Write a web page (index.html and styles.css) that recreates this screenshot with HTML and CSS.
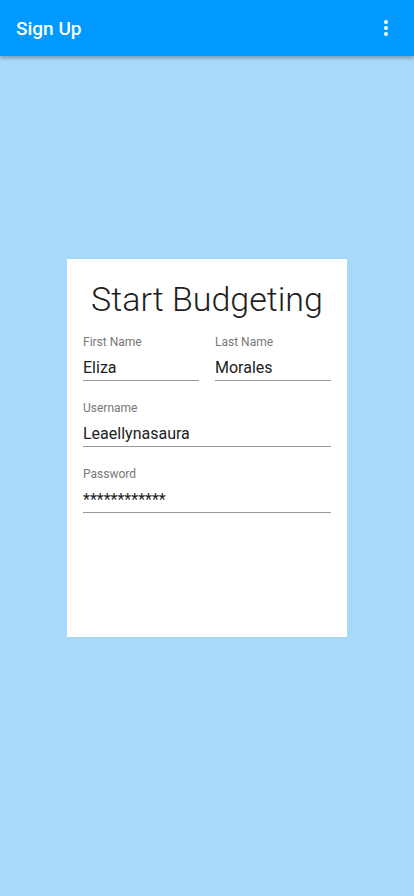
FILE: index.html
```html
<!DOCTYPE html>
<html lang="en">
<head>
<meta charset="utf-8">
<title>Sign Up</title>
<link rel="stylesheet" href="styles.css">
</head>
<body>
<header class="appbar">
  <h1 class="appbar-title">Sign Up</h1>
  <button class="menu-btn" aria-label="More options">
    <svg width="4" height="16" viewBox="0 0 4 16"><circle cx="2" cy="2" r="2" fill="#fff"/><circle cx="2" cy="8" r="2" fill="#fff"/><circle cx="2" cy="14" r="2" fill="#fff"/></svg>
  </button>
</header>
<main class="content">
  <section class="card">
    <h2 class="card-title">Start Budgeting</h2>
    <div class="fields">
      <div class="row">
        <div class="field">
          <label class="field-label">First Name</label>
          <div class="field-value">Eliza</div>
        </div>
        <div class="field">
          <label class="field-label">Last Name</label>
          <div class="field-value">Morales</div>
        </div>
      </div>
      <div class="field">
        <label class="field-label">Username</label>
        <div class="field-value">Leaellynasaura</div>
      </div>
      <div class="field">
        <label class="field-label">Password</label>
        <div class="field-value password">************</div>
      </div>
    </div>
  </section>
</main>
</body>
</html>
```
FILE: styles.css
```css
* { box-sizing: border-box; }
html, body { margin: 0; padding: 0; }
body {
  width: 414px;
  height: 896px;
  background: #a9d9f9;
  font-family: Roboto, "Noto Sans", sans-serif;
  overflow: hidden;
}
.appbar {
  height: 56px;
  background: #0099ff;
  display: flex;
  align-items: center;
  justify-content: space-between;
  padding: 0 4px 0 16px;
  box-shadow: 0 2px 4px rgba(0,0,0,0.3);
  position: relative;
  z-index: 1;
}
.appbar-title {
  margin: 0;
  color: #fff;
  font-size: 19px;
  font-weight: 500;
}
.menu-btn {
  width: 48px;
  height: 48px;
  background: none;
  border: 0;
  padding: 0;
  display: flex;
  align-items: center;
  justify-content: center;
}
.content {
  display: flex;
  justify-content: center;
  padding-top: 203px;
}
.card {
  width: 280px;
  height: 378px;
  background: #fff;
  padding: 20px 16px 16px;
}
.card-title {
  margin: 0 0 15px;
  text-align: center;
  font-size: 34px;
  font-weight: 300;
  color: #1e1e1e;
  line-height: 40px;
}
.fields {
  display: flex;
  flex-direction: column;
  gap: 19px;
}
.row {
  display: grid;
  grid-template-columns: 1fr 1fr;
  gap: 16px;
}
.field {
  display: flex;
  flex-direction: column;
  border-bottom: 1px solid #9a9a9a;
}
.field-label {
  font-size: 12px;
  color: #777;
  line-height: 16px;
}
.field-value {
  font-size: 16px;
  color: #222;
  line-height: 24px;
  margin-top: 6px;
}
.field-value.password {
  font-size: 16px;
}
```
